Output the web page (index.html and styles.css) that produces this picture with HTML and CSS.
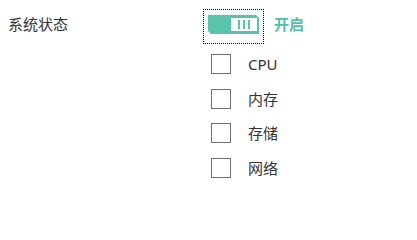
FILE: index.html
```html
<!DOCTYPE html>
<html lang="zh">
<head>
<meta charset="utf-8">
<link rel="stylesheet" href="styles.css">
</head>
<body>
<div class="panel">
  <div class="row-status">
    <div class="label">系统状态</div>
    <div class="focus">
      <div class="toggle">
        <div class="knob"><span class="bar"></span><span class="bar"></span><span class="bar"></span></div>
      </div>
    </div>
    <div class="state">开启</div>
  </div>
  <ul class="checks">
    <li class="check"><span class="box"></span><span class="text">CPU</span></li>
    <li class="check"><span class="box"></span><span class="text">内存</span></li>
    <li class="check"><span class="box"></span><span class="text">存储</span></li>
    <li class="check"><span class="box"></span><span class="text">网络</span></li>
  </ul>
</div>
</body>
</html>
```
FILE: styles.css
```css
html, body {
  margin: 0;
  padding: 0;
  background: #ffffff;
}
body {
  font-family: "Noto Sans", "Noto Sans CJK SC", sans-serif;
  font-size: 15px;
  color: #333333;
}
.panel {
  padding: 9px 0 0 8px;
}
.row-status {
  display: flex;
  align-items: flex-start;
  height: 35px;
}
.label {
  width: 195px;
  margin-top: 5px;
  line-height: 20px;
  color: #333333;
}
.focus {
  border: 1px dotted #000000;
  padding: 5px 4px 9px 4px;
  display: flex;
}
.toggle {
  width: 51px;
  height: 19px;
  background: #5ac3ac;
  clip-path: polygon(0 0, 48px 0, 51px 3px, 51px 19px, 3px 19px, 0 16px);
  display: flex;
  justify-content: flex-end;
  align-items: flex-start;
  padding: 3px 2px 0 0;
  box-sizing: border-box;
}
.knob {
  width: 26px;
  height: 13px;
  background: #ffffff;
  display: flex;
  justify-content: center;
  align-items: center;
  gap: 3px;
}
.bar {
  width: 2px;
  height: 9px;
  background: #5ac3ac;
}
.state {
  margin: 5px 0 0 10px;
  line-height: 20px;
  font-weight: 700;
  color: #52c0a6;
}
.checks {
  list-style: none;
  margin: 10px 0 0 203px;
  padding: 0;
  display: flex;
  flex-direction: column;
  gap: 14.5px;
}
.check {
  display: flex;
  align-items: center;
  height: 20px;
}
.box {
  width: 20px;
  height: 20px;
  box-sizing: border-box;
  border: 1px solid #707070;
  background: #ffffff;
}
.text {
  margin-left: 17px;
  line-height: 20px;
  color: #333333;
}
```
